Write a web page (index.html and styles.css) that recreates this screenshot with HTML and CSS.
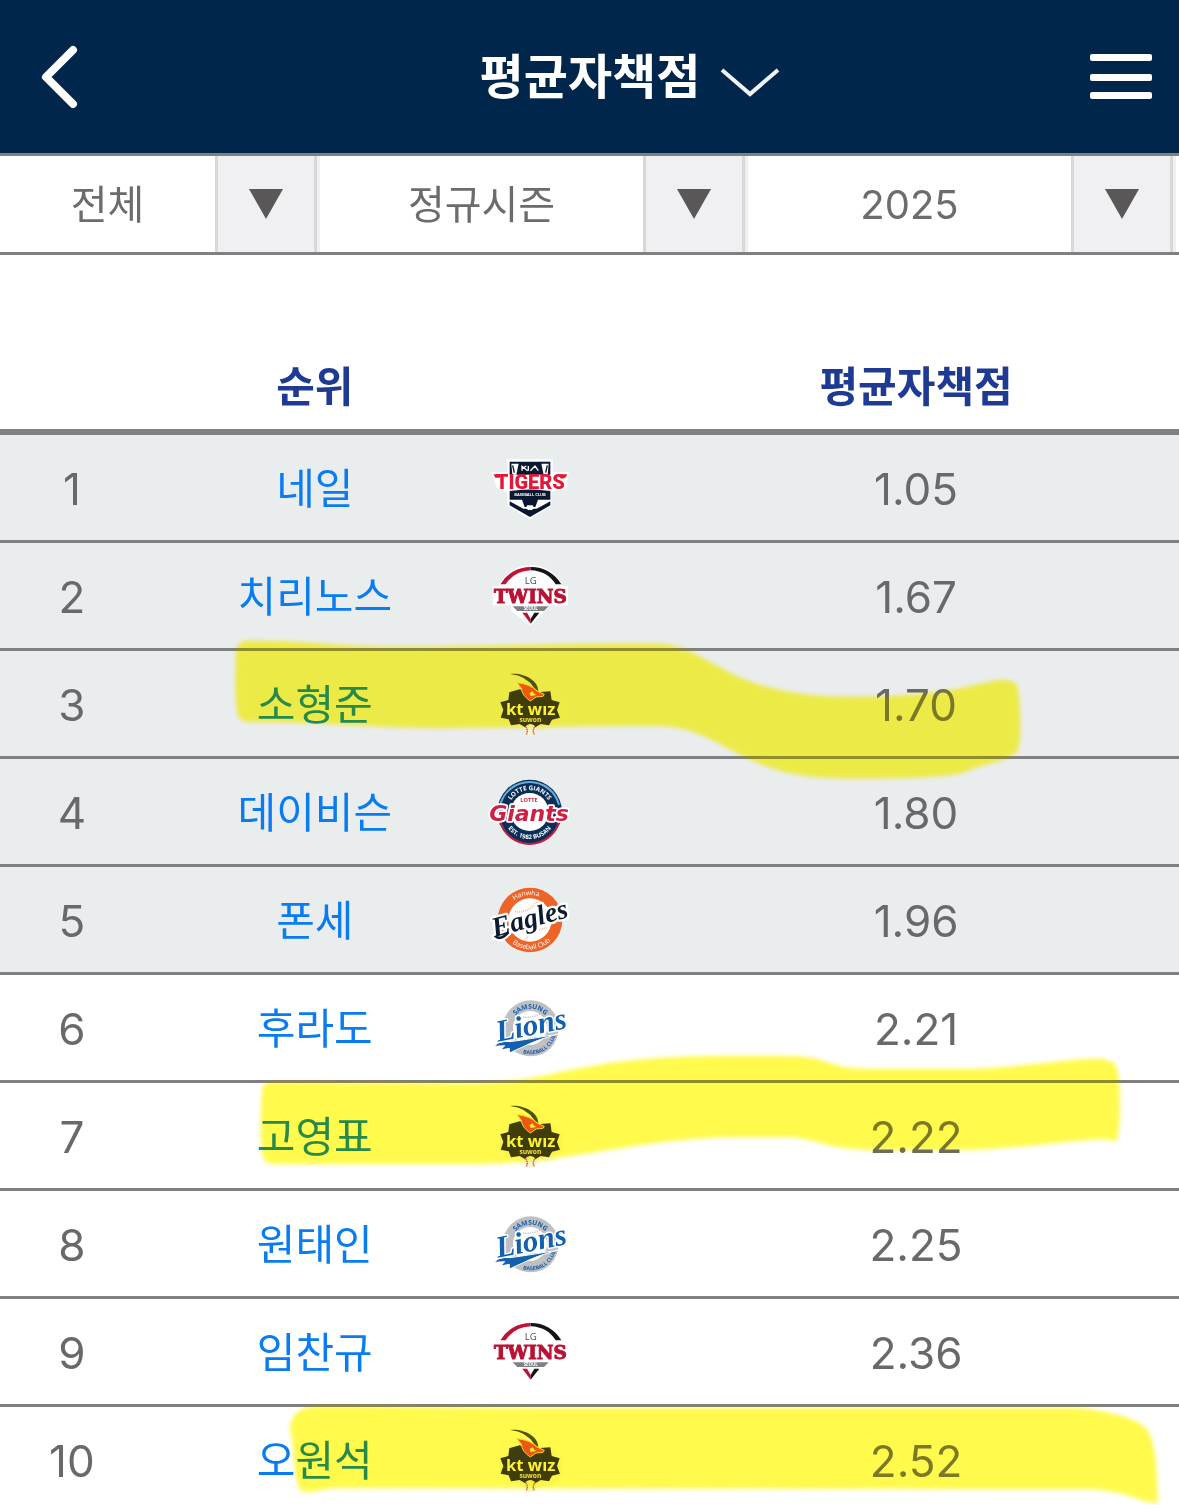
FILE: index.html
```html
<!DOCTYPE html>
<html lang="ko">
<head>
	<meta charset="UTF-8">
	<meta name="viewport" content="width=device-width">
	<title>평균자책점</title>
	<link rel="stylesheet" href="styles.css">
</head>
<body>
	<!-- team logos -->
	<svg class="defs" aria-hidden="true">
		<symbol id="tigers" viewBox="0 -7 300 270">
			<path d="M82 42H218V80H266L258 132L214 140V182L150 222L82 182V140L52 132L34 80H82Z" fill="#fff"/>
			<path d="M89 49H211V88H89Z" fill="#0a1730"/>
			<path d="M94 55H116L109 88H97ZM206 55H184L191 88H203Z" fill="#fff"/>
			<path d="M98 60L103 82M202 60L197 82" stroke="#0a1730" stroke-width="4"/>
			<path d="M126 76V63L143 76M126 70L139 62M145 76V62M151 76L165 62L175 76" fill="none" stroke="#fff" stroke-width="4"/>
			<path d="M89 137Q150 128 211 137V163H174L166 185H134L126 163H89Z" fill="#0a1730"/>
			<path d="M89 168L130 190H170L211 168V180L150 215L89 180Z" fill="#0a1730"/>
			<path d="M137 188L142 180H158L163 188L156 194H144Z" fill="#fff"/>
			<path d="M40 87H60V97H46ZM262 87H240V97H256Z" fill="#e31837"/>
			<text class="block" x="151" y="131" font-size="60" fill="#e31837">TIGERS</text>
			<text class="sans" x="150" y="152" font-size="12" fill="#fff">BASEBALL CLUB</text>
		</symbol>
		<symbol id="twins" viewBox="0 1 300 270">
			<path d="M55 106Q88 44 152 44Q218 44 248 106H264V164H212L152 224L94 182V164H38V106Z" fill="#fff"/>
			<path d="M61 101A104 104 0 0 1 152 49V59Q102 61 77 101Z" fill="#c01235"/>
			<path d="M152 49A104 104 0 0 1 244 101H227Q202 61 152 59Z" fill="#151515"/>
			<text class="light" x="152" y="101" font-size="29" fill="#4c4c4e">LG</text>
			<text class="serif" x="151" y="157" font-size="55" fill="#b91235" stroke="#b91235" stroke-width="3">TWINS</text>
			<path d="M98 167H206L192 181H112Z" fill="#7f8082"/>
			<text class="sans" x="152" y="179" font-size="13" fill="#fff">SEOUL</text>
			<path d="M127 186H141L152 205V219Z" fill="#c01235"/>
			<path d="M178 186H163L152 205V219Z" fill="#151515"/>
		</symbol>
		<symbol id="ktwiz" viewBox="0 -5 300 270">
			<path d="M85 90L115 85L190 90L224 96L232 122H248V170L220 205L165 213H140L85 195L58 170V122H80Z" fill="#f3f0b0" opacity=".35"/>
			<path d="M91 40C135 36 176 62 175 92L163 83Q140 45 91 40Z" fill="#3b3d0e"/>
			<path d="M88 95L119 86L143 94H181L211 92L215 118L239 125L231 148L240 171L216 177L207 194L182 190L151 209L119 190L93 194L86 176L62 171L70 148L61 125L85 118Z" fill="#25230c"/>
			<path d="M111 66Q152 70 171 91L193 101L189 107L168 109L151 121Q126 105 124 83Z" fill="#e8421c" stroke="#ffd451" stroke-width="3"/>
			<path d="M149 97L158 92L162 99L169 103L152 106Z" fill="#fff36a"/>
			<text class="sans" x="152" y="164" font-size="50" fill="#fff68c">kt wız</text>
			<text class="sans" x="151" y="184" font-size="20" fill="#f4e58b">suwon</text>
			<circle cx="151" cy="208" r="18" fill="#f7f3d9"/>
			<path d="M137 198Q146 210 139 221M165 198Q156 210 163 221" fill="none" stroke="#e34850" stroke-width="4" stroke-dasharray="5 2"/>
		</symbol>
		<symbol id="giants" viewBox="0 -11 300 270">
			<circle cx="149" cy="124" r="97" fill="#0b2e56"/>
			<path d="M61 102A91 91 0 0 1 237 102" fill="none" stroke="#66afe0" stroke-width="6"/>
			<path d="M61 152A91 91 0 0 0 237 152" fill="none" stroke="#c51e43" stroke-width="6"/>
			<circle cx="149" cy="124" r="57" fill="#fff"/>
			<path id="giants-top" d="M83 124A66 66 0 0 1 215 124" fill="none"/>
			<path id="giants-bottom" d="M68 124A81 81 0 0 0 230 124" fill="none"/>
			<text class="sans" font-size="19" fill="#fff"><textPath href="#giants-top" startOffset="50%">LOTTE GIANTS</textPath></text>
			<text class="sans" font-size="18" fill="#fff"><textPath href="#giants-bottom" startOffset="50%">EST. 1982 BUSAN</textPath></text>
			<text class="sans" x="147" y="94" font-size="17" fill="#d5294c">LOTTE</text>
			<text class="slant" x="147" y="150" font-size="66" fill="#cf1f43" stroke="#fff" stroke-width="11">Giants</text>
		</symbol>
		<symbol id="eagles" viewBox="0 -2 300 270">
			<circle cx="150" cy="133" r="97" fill="#ee6428"/>
			<circle cx="150" cy="133" r="65" fill="#fff"/>
			<path d="M105 108Q147 111 171 78M135 195Q150 164 201 157" fill="none" stroke="#efaa78" stroke-width="6" stroke-dasharray="2 4"/>
			<path id="eagles-top" d="M75 133A75 75 0 0 1 225 133" fill="none"/>
			<path id="eagles-bottom" d="M62 133A88 88 0 0 0 238 133" fill="none"/>
			<text class="light" font-size="20" fill="#fff"><textPath href="#eagles-top" startOffset="45%">Hanwha</textPath></text>
			<text class="light" font-size="20" fill="#fff"><textPath href="#eagles-bottom" startOffset="52%">Baseball Club</textPath></text>
			<g transform="rotate(-15 150 133)">
				<path d="M38 154Q50 170 78 151" fill="none" stroke="#fff" stroke-width="20" stroke-linecap="round"/>
				<text class="script" x="150" y="155" font-size="84" fill="#0b1b31" stroke="#fff" stroke-width="14">Eagles</text>
				<path d="M38 154Q50 170 78 151" fill="none" stroke="#0b1b31" stroke-width="8"/>
			</g>
		</symbol>
		<symbol id="lions" viewBox="0 -8 300 270">
			<circle cx="152" cy="128" r="84" fill="#bfc0c4"/>
			<circle cx="150" cy="127" r="51" fill="#fff"/>
			<path d="M115 91Q149 102 184 83M118 172Q150 150 185 157" fill="none" stroke="#bfc1c4" stroke-width="4" stroke-dasharray="4 3"/>
			<path id="lions-top" d="M92 128A59 59 0 0 1 210 128" fill="none"/>
			<path id="lions-bottom" d="M74 128A77 77 0 0 0 230 128" fill="none"/>
			<text class="sans" font-size="20" fill="#155da9"><textPath href="#lions-top" startOffset="50%">SAMSUNG</textPath></text>
			<text class="sans" font-size="16" fill="#155da9"><textPath href="#lions-bottom" startOffset="66%">BASEBALL CLUB</textPath></text>
			<path d="M43 182Q58 163 90 168Q150 160 235 145Q170 162 128 184L88 202V188L62 193L74 180Z" fill="#1260ae" stroke="#fff" stroke-width="3"/>
			<g transform="rotate(-11 150 128)">
				<text class="script" x="155" y="149" font-size="92" fill="#1260ae" stroke="#fff" stroke-width="9">Lions</text>
			</g>
		</symbol>
	</svg>

	<header class="topbar">
		<button class="icon-btn" type="button" aria-label="뒤로">
			<svg width="42" height="66" viewBox="0 0 42 66"><path d="M35 6L8 33L35 60" fill="none" stroke="#fff" stroke-width="8" stroke-linecap="round" stroke-linejoin="round"/></svg>
		</button>
		<button class="title" type="button">
			<span>평균자책점</span>
			<svg width="60" height="30" viewBox="0 0 60 30"><path d="M2 2L30 26L58 2" fill="none" stroke="#f2f3fa" stroke-width="4"/></svg>
		</button>
		<button class="icon-btn" type="button" aria-label="메뉴">
			<svg width="62" height="46" viewBox="0 0 62 46" fill="#fff"><rect width="62" height="7" rx="2"/><rect y="20" width="62" height="7" rx="2"/><rect y="38" width="62" height="7" rx="2"/></svg>
		</button>
	</header>

	<div class="filters">
		<label class="filter">
			<select aria-label="팀"><option>전체</option></select>
			<span class="arrow"><i></i></span>
		</label>
		<label class="filter">
			<select aria-label="시즌"><option>정규시즌</option></select>
			<span class="arrow"><i></i></span>
		</label>
		<label class="filter">
			<select aria-label="연도"><option>2025</option></select>
			<span class="arrow"><i></i></span>
		</label>
	</div>

	<main class="list">
		<table class="ranking">
			<thead>
				<tr>
					<th class="rank"></th>
					<th class="name">순위</th>
					<th class="team"></th>
					<th class="era">평균자책점</th>
				</tr>
			</thead>
			<tbody>
				<tr class="top"><td>1</td><td><a href="#">네일</a></td><td><svg class="logo"><use href="#tigers"/></svg></td><td>1.05</td></tr>
				<tr class="top"><td>2</td><td><a href="#">치리노스</a></td><td><svg class="logo"><use href="#twins"/></svg></td><td>1.67</td></tr>
				<tr class="top"><td>3</td><td><a href="#">소형준</a></td><td><svg class="logo"><use href="#ktwiz"/></svg></td><td>1.70</td></tr>
				<tr class="top"><td>4</td><td><a href="#">데이비슨</a></td><td><svg class="logo"><use href="#giants"/></svg></td><td>1.80</td></tr>
				<tr class="top"><td>5</td><td><a href="#">폰세</a></td><td><svg class="logo"><use href="#eagles"/></svg></td><td>1.96</td></tr>
				<tr><td>6</td><td><a href="#">후라도</a></td><td><svg class="logo"><use href="#lions"/></svg></td><td>2.21</td></tr>
				<tr><td>7</td><td><a href="#">고영표</a></td><td><svg class="logo"><use href="#ktwiz"/></svg></td><td>2.22</td></tr>
				<tr><td>8</td><td><a href="#">원태인</a></td><td><svg class="logo"><use href="#lions"/></svg></td><td>2.25</td></tr>
				<tr><td>9</td><td><a href="#">임찬규</a></td><td><svg class="logo"><use href="#twins"/></svg></td><td>2.36</td></tr>
				<tr><td>10</td><td><a href="#">오원석</a></td><td><svg class="logo"><use href="#ktwiz"/></svg></td><td>2.52</td></tr>
			</tbody>
		</table>

		<!-- highlighter strokes over the kt players -->
		<svg class="marker" viewBox="0 255 1179 1260" preserveAspectRatio="none" aria-hidden="true">
			<g id="strokes">
				<path d="M236 652Q236 642 247 641C310 640 340 648 420 647S600 643 660 644C710 646 725 697 850 697C950 697 970 684 1000 680Q1018 679 1018 690C1021 715 1021 735 1018 750C1010 762 985 762 965 772C945 779 850 779 830 778C740 775 720 727 660 726C610 725 570 727 440 728C360 728 340 722 250 722Q237 722 237 710C234 690 236 670 236 652Z"/>
				<path d="M262 1092Q262 1081 274 1082L470 1083C560 1083 570 1057 720 1056H785C830 1056 825 1069 870 1069H970C1020 1068 1070 1058 1100 1059Q1118 1060 1118 1075C1121 1100 1120 1120 1117 1141L1103 1139C1050 1142 1010 1150 950 1150H880C825 1150 815 1137 785 1137H740C640 1137 570 1164 470 1164H275Q262 1164 262 1150C260 1130 261 1110 262 1092Z"/>
				<path d="M290 1430C291 1412 303 1405 325 1406C400 1406 430 1408 600 1408H1080C1125 1414 1147 1422 1151 1438C1158 1460 1156 1480 1158 1503L1144 1501C1120 1491 1100 1489 1080 1489L340 1488C320 1488 312 1494 302 1491C293 1484 296 1450 290 1430Z"/>
			</g>
		</svg>
		<svg class="marker tint" viewBox="0 255 1179 1260" preserveAspectRatio="none" aria-hidden="true"><use href="#strokes"/></svg>
	</main>
</body>
</html>
```

FILE: styles.css
```css
*{
	margin: 0;
	padding: 0;
	box-sizing: border-box;
}
body{
	display: flex;
	flex-direction: column;
	height: 100vh;
	background: #fff;
	color: #69696b;
	font-family: Inter, "Noto Sans CJK KR", sans-serif;
	font-size: 44px;
}
button{
	border: 0;
	background: none;
	color: inherit;
	font: inherit;
	cursor: pointer;
}
svg{
	display: block;
}
.defs{
	display: none;
}

/* header */
.topbar{
	display: flex;
	align-items: center;
	justify-content: space-between;
	flex: none;
	height: 156px;
	padding: 0 27px 0 38px;
	border-bottom: 3px solid #808080;
	background: #00264b;
	color: #fff;
}
.icon-btn{
	display: flex;
	width: 62px;
}
.title{
	display: flex;
	align-items: center;
	gap: 20px;
	padding-left: 70px;
	font-size: 48px;
	font-weight: bold;
	line-height: 72px;
}
.title svg{
	margin-top: 12px;
}

/* filters */
.filters{
	display: grid;
	grid-template-columns: 320fr 428fr 428fr;
	flex: none;
	height: 99px;
	padding-right: 3px;
	border-bottom: 3px solid #808080;
}
.filter{
	display: flex;
	border-right: 3px solid #f0f0f2;
}
.filter select{
	flex: 1;
	min-width: 0;
	border: 0;
	background: #fff;
	color: #6d6b6b;
	font-family: inherit;
	font-size: 40px;
	text-align: center;
	text-align-last: center;
	appearance: none;
}
.arrow{
	display: flex;
	align-items: center;
	justify-content: center;
	width: 102px;
	border: solid #d8d8da;
	border-width: 0 3px;
	background: #f0f0f2;
}
.arrow i{
	border: solid transparent;
	border-width: 30px 17px 0;
	border-top-color: #5a5758;
}

/* ranking table */
.list{
	position: relative;
	flex: 1;
	min-height: 0;
	overflow-y: auto;
	scrollbar-width: none;
}
.ranking{
	width: 100%;
	table-layout: fixed;
	border-collapse: separate;
	border-spacing: 0;
	text-align: center;
}
.ranking th{
	height: 180px;
	padding-top: 90px;
	border-bottom: 6px solid #808080;
	color: #1f3a93;
	font-size: 42px;
	line-height: 60px;
}
.ranking td{
	height: 108px;
	padding-top: 2px;
	border-bottom: 3px solid #808080;
	line-height: 60px;
}
.ranking .top{
	background: #eaedee;
}
.ranking .rank{
	width: 12.2%;
}
.ranking .name{
	width: 29%;
}
.ranking .team{
	width: 14.2%;
}
.ranking a{
	color: #0a7cf2;
	font-size: 42px;
	text-decoration: none;
}
.logo{
	width: 100px;
	height: 90px;
	margin: -2px 0 0 -6px;
}
symbol text{
	text-anchor: middle;
	stroke-linejoin: round;
	paint-order: stroke;
}
.serif{
	font-family: "DejaVu Serif", serif;
	font-weight: bold;
}
.block{
	font-family: Roboto, sans-serif;
	font-weight: 900;
}
.sans{
	font-family: "Open Sans", sans-serif;
	font-weight: bold;
}
.light{
	font-family: "Open Sans", sans-serif;
}
.slant{
	font-family: "DejaVu Sans", sans-serif;
	font-weight: bold;
	font-style: italic;
}
.script{
	font-family: "Liberation Serif", serif;
	font-weight: bold;
	font-style: italic;
}
.marker{
	position: absolute;
	top: 0;
	left: 0;
	width: 100%;
	height: 1260px;
	fill: #fffa4c;
	filter: blur(2px);
	mix-blend-mode: multiply;
	pointer-events: none;
}
.marker.tint{
	mix-blend-mode: normal;
	opacity: .12;
}
```
